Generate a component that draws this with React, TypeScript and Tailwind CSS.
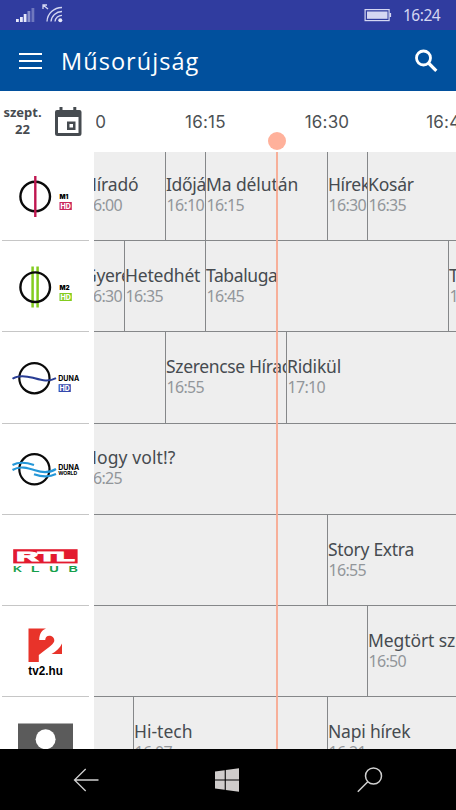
import React from "react";

type Program = { w: string; title?: string; time?: string; shift?: string; spacing?: string };
type Row = { h: string; top: string; logo: React.ReactNode; programs: Program[] };

const M1 = () => (
  <svg width="94" height="91" viewBox="0 0 94 91" className="block">
    <circle cx="35.2" cy="46.5" r="14.8" fill="none" stroke="#0a0a0a" strokeWidth="2.4" />
    <path d="M35.3 26v41" stroke="#bf1650" strokeWidth="2.4" />
    <text x="59.5" y="48.7" fontSize="6.3" fontWeight="900" className="font-['Inter',sans-serif]">M1</text>
    <rect x="59.5" y="52" width="12.3" height="8" fill="#c9275d" />
    <text x="60.6" y="58.6" fontSize="7" fontWeight="800" fill="#fff" className="font-['Inter',sans-serif]">HD</text>
  </svg>
);

const M2 = () => (
  <svg width="94" height="91" viewBox="0 0 94 91" className="block">
    <path d="M32.6 25.5v41M37.6 25.5v41" stroke="#83cc1f" strokeWidth="2.5" />
    <circle cx="35.2" cy="46.2" r="14.8" fill="none" stroke="#0a0a0a" strokeWidth="2.4" />
    <text x="59.5" y="48.7" fontSize="6.3" fontWeight="900" className="font-['Inter',sans-serif]">M2</text>
    <rect x="59.5" y="52" width="12.3" height="8" fill="#83cc1f" />
    <text x="60.6" y="58.6" fontSize="7" fontWeight="800" fill="#fff" className="font-['Inter',sans-serif]">HD</text>
  </svg>
);

const Duna = () => (
  <svg width="94" height="91" viewBox="0 0 94 91" className="block">
    <circle cx="34.4" cy="46.2" r="15.1" fill="none" stroke="#0a0a0a" strokeWidth="2.2" />
    <path d="M12.5 46.8C18 43 25 43.6 33 45.8S48 50.5 56 46.2" fill="none" stroke="#293d94" strokeWidth="2" />
    <text x="58.2" y="48.6" fontSize="7" fontWeight="700" textLength="21" lengthAdjust="spacingAndGlyphs" className="font-['Inter',sans-serif]">DUNA</text>
    <rect x="58.6" y="52.2" width="12.2" height="7.8" fill="#3349ad" />
    <text x="59.6" y="58.7" fontSize="7" fontWeight="800" fill="#fff" className="font-['Inter',sans-serif]">HD</text>
  </svg>
);

const DunaWorld = () => (
  <svg width="94" height="91" viewBox="0 0 94 91" className="block">
    <circle cx="34.4" cy="45.3" r="15.1" fill="none" stroke="#0a0a0a" strokeWidth="2.2" />
    <g fill="none" stroke="#2597d8" strokeWidth="2.1">
      <path d="M12.5 41C19 37.5 26 38.2 34 41" />
      <path d="M12.5 46C20 41.5 28 44 35 46.3S49 49.5 56 45" />
      <path d="M34 50.2C42 53 49 53.5 56 50" />
    </g>
    <text x="58.2" y="45.8" fontSize="7" fontWeight="700" textLength="21" lengthAdjust="spacingAndGlyphs" className="font-['Inter',sans-serif]">DUNA</text>
    <text x="58.2" y="51.2" fontSize="5.4" fontWeight="700" textLength="19" lengthAdjust="spacingAndGlyphs" className="font-['Inter',sans-serif]">WORLD</text>
  </svg>
);

const Rtl = () => (
  <svg width="94" height="91" viewBox="0 0 94 91" className="block">
    <rect x="13.2" y="34.2" width="64.4" height="14.2" fill="#e31b2f" />
    <text x="16.5" y="45.8" fontSize="12.5" fontWeight="700" fill="#fff" stroke="#fff" strokeWidth="1.1" textLength="58" lengthAdjust="spacingAndGlyphs" className="font-['Liberation_Sans',sans-serif]">RTL</text>
    <g fontSize="9.200" fontWeight="700" fill="#16a04b" className="font-['Liberation_Sans',sans-serif]">
      <text x="13" y="56.8" textLength="9" lengthAdjust="spacingAndGlyphs">K</text>
      <text x="31" y="56.8" textLength="8.5" lengthAdjust="spacingAndGlyphs">L</text>
      <text x="49.3" y="56.8" textLength="9.5" lengthAdjust="spacingAndGlyphs">U</text>
      <text x="68.5" y="56.8" textLength="9.4" lengthAdjust="spacingAndGlyphs">B</text>
    </g>
  </svg>
);

const Tv2 = () => (
  <svg width="94" height="91" viewBox="0 0 94 91" className="block">
    <path d="M28.5 22.6H46C42 24 39.5 27.5 39.2 34H45.2C45.5 31 47 29.8 49.2 29.8C52 29.8 54.3 31.5 54.3 34.5C54.3 37.5 50 40.5 38.8 49V56H28.5Z" fill="#e8332a" />
    <path d="M62 37.5V48H51.5C56 45.500 60 42 62 37.500Z" fill="#e8332a" />
    <text x="28.3" y="69.3" fontSize="12.500" fontWeight="700" textLength="34.5" lengthAdjust="spacingAndGlyphs" className="font-['Liberation_Sans',sans-serif]">tv2.hu</text>
  </svg>
);

const Person = () => (
  <svg width="94" height="52" viewBox="0 0 94 52" className="block">
    <rect x="18" y="26.500" width="55" height="26" fill="#5b5b5b" />
    <circle cx="45.6" cy="42.200" r="10" fill="#fff" />
  </svg>
);

const rows: Row[] = [
  { h: "h-[89px]", top: "pt-[20px]", logo: <div className="-mt-[2px]"><M1 /></div>, programs: [
    { w: "w-[72px]", title: "Híradó", time: "16:00", shift: "-ml-[10px]", spacing: "tracking-[-0.2px]" },
    { w: "w-[40px]", title: "Időjárás", time: "16:10" },
    { w: "w-[122px]", title: "Ma délután", time: "16:15", spacing: "tracking-[-0.1px]" },
    { w: "w-[40px]", title: "Hírek", time: "16:30" },
    { w: "w-[100px]", title: "Kosár", time: "16:35", spacing: "tracking-[-0.2px]" },
  ] },
  { h: "h-[91px]", top: "pt-[22px]", logo: <M2 />, programs: [
    { w: "w-[31px]", title: "Gyerekek", time: "16:30", shift: "-ml-[10px]" },
    { w: "w-[81px]", title: "Hetedhét", time: "16:35", spacing: "tracking-[-0.2px]" },
    { w: "w-[243px]", title: "Tabaluga", time: "16:45", spacing: "tracking-[-0.4px]" },
    { w: "w-[40px]", title: "Tabaluga", time: "17:15" },
  ] },
  { h: "h-[92px]", top: "pt-[22px]", logo: <Duna />, programs: [
    { w: "w-[72px]" },
    { w: "w-[121px]", title: "Szerencse Híradó", time: "16:55" },
    { w: "w-[200px]", title: "Ridikül", time: "17:10", spacing: "tracking-[-0.2px]" },
  ] },
  { h: "h-[91px]", top: "pt-[21px]", logo: <DunaWorld />, programs: [
    { w: "w-[400px]", title: "Hogy volt!?", time: "16:25", shift: "-ml-[10px]", spacing: "tracking-[0.1px]" },
  ] },
  { h: "h-[91px]", top: "pt-[22px]", logo: <Rtl />, programs: [
    { w: "w-[234px]" },
    { w: "w-[200px]", title: "Story Extra", time: "16:55", spacing: "tracking-[-0.3px]" },
  ] },
  { h: "h-[91px]", top: "pt-[22px]", logo: <Tv2 />, programs: [
    { w: "w-[274px]" },
    { w: "w-[200px]", title: "Megtört szívek", time: "16:50", spacing: "tracking-[-0.1px]" },
  ] },
  { h: "h-[52px]", top: "pt-[22px]", logo: <Person />, programs: [
    { w: "w-[40px]" },
    { w: "w-[194px]", title: "Hi-tech", time: "16:07", spacing: "tracking-[0px]" },
    { w: "w-[200px]", title: "Napi hírek", time: "16:21", spacing: "tracking-[-0.2px]" },
  ] },
];

function Cell({ p, top, last }: { p: Program; top: string; last: boolean }) {
  return (
    <div className={`${p.w} ${top} h-full shrink-0 overflow-hidden whitespace-nowrap ${last ? "" : "border-r border-[#858789]"}`}>
      {p.title && (
        <div className={p.shift ?? ""}>
          <div className={`font-['Noto_Sans',sans-serif] text-[17.5px] leading-[25px] text-[#464b50] ${p.spacing ?? "tracking-[-0.35px]"}`}>{p.title}</div>
          <div className="ml-[0.5px] font-['Noto_Sans',sans-serif] text-[16px] leading-[17px] tracking-[-0.7px] text-[#92969a]">{p.time}</div>
        </div>
      )}
    </div>
  );
}

export default function App() {
  return (
    <div className="flex h-[810px] w-[456px] flex-col overflow-hidden bg-white">
      <div className="flex h-[30px] shrink-0 items-center bg-[#303c9f] pl-4 pr-4 text-[#d4d7f2]">
        <svg width="50" height="30" viewBox="0 0 50 30">
          <g fill="#e6e8fa">
            <rect x="0" y="19" width="2.800" height="3" />
            <rect x="4" y="17" width="2.800" height="5" />
            <rect x="7.700" y="14" width="2.800" height="8" />
            <rect x="11.500" y="11" width="2.800" height="11" opacity=".5" />
            <rect x="15.500" y="8" width="2.800" height="14" opacity=".35" />
          </g>
          <g fill="none" stroke="#d4d7f2" strokeWidth="1.300">
            <path d="M31 21.500A15 14.500 0 0 1 46 7.500M35 21.500A11 10.500 0 0 1 46 11.500M39 21.500A7 7 0 0 1 46 15.300" />
            <path d="M27 5l5 4M27 9V5h4" />
          </g>
          <circle cx="44.300" cy="20.200" r="2" fill="#e6e8fa" />
        </svg>
        <svg width="28" height="14" viewBox="0 0 28 14" className="ml-auto">
          <rect x="1.100" y="1.600" width="24" height="11" fill="none" stroke="currentColor" strokeWidth="1.200" />
          <rect x="3" y="3.500" width="20.500" height="7.300" fill="currentColor" />
          <rect x="25.500" y="5" width="1.600" height="4" fill="currentColor" />
        </svg>
        <span className="ml-[11px] w-[37px] whitespace-nowrap font-['Noto_Sans',sans-serif] text-[15.500px] leading-[30px] tracking-[-0.5px]">16:24</span>
      </div>

      <header className="flex h-[61px] shrink-0 items-center bg-[#01509d] pl-[19px] pr-[18px] text-white">
        <div className="flex w-[23px] flex-col gap-[5px]">
          <div className="h-[2px] bg-white" />
          <div className="h-[2px] bg-white" />
          <div className="h-[2px] bg-white" />
        </div>
        <h1 className="ml-[19px] font-['Open_Sans',sans-serif] text-[23.500px] font-medium leading-[30px] tracking-[1.05px]">Műsorújság</h1>
        <svg width="24" height="24" viewBox="0 0 24 24" className="ml-auto">
          <circle cx="9.500" cy="9" r="7" fill="none" stroke="#fff" strokeWidth="2.800" />
          <path d="M14.500 14l7.800 7.800" stroke="#fff" strokeWidth="3.200" />
        </svg>
      </header>

      <div className="flex h-[61px] shrink-0">
        <div className="flex w-[94px] shrink-0 text-[#464b50]">
          <div className="mt-[13px] w-[45px] text-center font-['Noto_Sans',sans-serif] text-[13px] font-bold leading-[17px]">
            szept.<br />22
          </div>
          <svg width="28" height="32" viewBox="0 0 28 32" className="ml-[9px] mt-[15px]">
            <path fillRule="evenodd" d="M5.500 1h3v3h10.800V1h3v3H25.500Q27.500 4 27.500 6V27.500Q27.500 30 25 30H3.500Q1 30 1 27.500V6Q1 4 3 4H5.500ZM4 11V27H24.500V11Z" fill="#464b50" />
            <path fillRule="evenodd" d="M13 15.500h8.500v8.500H13ZM15.500 18v3.500H19V18Z" fill="#464b50" />
          </svg>
        </div>
        <div className="ml-[2px] flex flex-1 overflow-hidden">
          <div className="-ml-[73px] flex shrink-0 pt-px text-center font-['Inter',sans-serif] text-[17px] leading-[60px] tracking-[0.2px] text-[#4d5154]">
            {["16:00", "16:15", "16:30", "16:45"].map((t) => (
              <span key={t} className="w-[121.600px] shrink-0">{t}</span>
            ))}
          </div>
        </div>
      </div>

      <main className="relative h-[597px] shrink-0">
        {rows.map((r, i) => (
          <div key={i} className={`${r.h} flex overflow-hidden`}>
            <div className="flex w-[94px] shrink-0 flex-col overflow-hidden">
              <div className="min-h-0 flex-1 overflow-hidden">{r.logo}</div>
              {i < 6 && <div className="ml-[2px] h-px w-[87px] shrink-0 bg-[#c6c6c6]" />}
            </div>
            <div className={`flex flex-1 overflow-hidden bg-[#eeeeee] ${i < 6 ? "border-b border-[#858789]" : ""}`}>
              {r.programs.map((p, k) => (
                <Cell key={k} p={p} top={r.top} last={k === r.programs.length - 1} />
              ))}
            </div>
          </div>
        ))}
        <div className="absolute bottom-0 left-[276px] top-0 w-[2px] bg-[#f7a78f]/90" />
        <div className="absolute -top-[20px] left-[268px] size-[18px] rounded-full bg-[#ffb19b]" />
      </main>

      <footer className="flex h-[61px] shrink-0 items-center bg-black">
        <svg width="26" height="24" viewBox="0 0 26 24" className="ml-[73px]" fill="none" stroke="#d0d0d0" strokeWidth="1.300">
          <path d="M25.500 12H1.500M12.700 1L1.500 12l11.200 11" />
        </svg>
        <svg width="24" height="24" viewBox="0 0 24 24" className="ml-[116px]" fill="#cfcccb">
          <path d="M0 3.500L9.700 2.200V11.400H0ZM10.800 2L24 .2V11.400H10.800ZM0 12.500H9.700V21.700L0 20.400ZM10.800 12.500H24V23.700L10.800 21.900Z" />
        </svg>
        <svg width="26" height="26" viewBox="0 0 26 26" className="ml-[118px]" fill="none" stroke="#d0d0d0" strokeWidth="1.500">
          <circle cx="16.500" cy="9" r="8" />
          <path d="M10.800 14.700L.8 24.700" />
        </svg>
      </footer>
    </div>
  );
}
